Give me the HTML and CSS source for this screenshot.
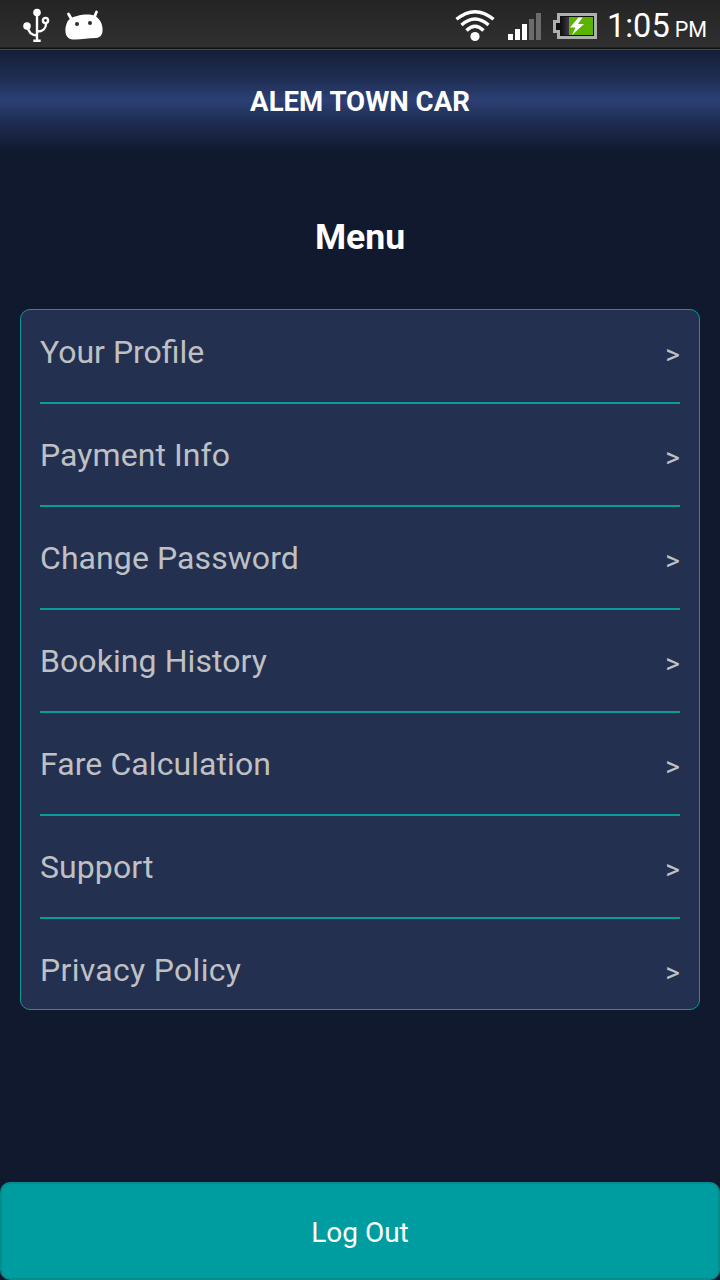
FILE: index.html
```html
<!DOCTYPE html>
<html lang="en">
<head>
<meta charset="UTF-8">
<meta name="viewport" content="width=device-width, initial-scale=1.0">
<title>Alem Town Car</title>
<link rel="stylesheet" href="styles.css">
</head>
<body>
<div class="screen">

  <div class="status-bar">
    <svg class="icon-usb" width="28" height="36" viewBox="0 0 28 36">
      <g fill="none" stroke="#fff" stroke-width="2.4">
        <path d="M14 5V34M14 28.5C8 28 5 25 4.500 19M14 24.500C20 24.500 23 21 23 17"/>
        <circle cx="22.500" cy="13.500" r="2.600"/>
      </g>
      <circle cx="14" cy="5.500" r="3.800" fill="#fff"/>
      <circle cx="4" cy="19" r="3.800" fill="#fff"/>
      <path d="M10.300 32.500h7.400v2.500h-7.400z" fill="#fff"/>
    </svg>
    <svg class="icon-android" width="40" height="32" viewBox="0 0 40 32">
      <path d="M4.500 4L8 10M32.500 2L30 8" stroke="#fff" stroke-width="2.800" stroke-linecap="round"/>
      <path d="M2.500 14C4 9 8 7 13 6C18 4.700 24 4.200 28 5C34 6 38 12 38.500 18C39 24 37 27.500 32 28C24 28 16 30 9 29.500C4 29 2 26 1.500 22C1.200 19 1.500 16.500 2.500 14Z" fill="#fff"/>
      <circle cx="13" cy="14" r="2" fill="#2b2b2b"/>
      <circle cx="26" cy="13" r="2" fill="#2b2b2b"/>
    </svg>

    <div class="status-right">
      <svg class="icon-wifi" width="42" height="34" viewBox="0 0 42 34">
        <g fill="none" stroke="#fff" stroke-width="3.400">
          <path d="M2.500 11.300Q21 -4 39.500 11.300"/>
          <path d="M7.500 17Q21 5 34.500 17"/>
          <path d="M12.500 22.500Q21 14 29.500 22.500"/>
        </g>
        <circle cx="21" cy="28.500" r="4.600" fill="#fff"/>
      </svg>
      <svg class="icon-signal" width="33" height="28" viewBox="0 0 33 28">
        <path d="M0 21h5v6h-5zM7 16h5v11h-5zM14 11h5v16h-5z" fill="#fff"/>
        <path d="M21 6h5v21h-5zM28 0h5v27h-5z" fill="#6b6b6b"/>
      </svg>
      <svg class="icon-battery" width="44" height="27" viewBox="0 0 44 27">
        <defs>
          <linearGradient id="cell" x1="0" x2="1"><stop offset="0" stop-color="#111"/><stop offset="1" stop-color="#41364a"/></linearGradient>
        </defs>
        <path d="M4 0H44V26H4V20H0V7H4Z" fill="#adb0ad"/>
        <path d="M7 3H41V23H7V17H3V10H7Z" fill="#111"/>
        <path d="M8 4h8v18h-8z" fill="url(#cell)"/>
        <path d="M16 4h24v18h-24z" fill="#5bb500"/>
        <path d="M25.500 4.500L17 14.500L22.500 14.500L19 22L31 11L25 11L29.500 4.500Z" fill="#fff"/>
      </svg>
      <div class="clock">1:05<span class="meridiem">PM</span></div>
    </div>
  </div>

  <header class="title-bar">ALEM TOWN CAR</header>

  <h1 class="heading">Menu</h1>

  <nav class="menu">
    <a class="menu-item"><span>Your Profile</span><span class="arrow">&gt;</span></a>
    <a class="menu-item"><span>Payment Info</span><span class="arrow">&gt;</span></a>
    <a class="menu-item"><span>Change Password</span><span class="arrow">&gt;</span></a>
    <a class="menu-item"><span>Booking History</span><span class="arrow">&gt;</span></a>
    <a class="menu-item"><span>Fare Calculation</span><span class="arrow">&gt;</span></a>
    <a class="menu-item"><span>Support</span><span class="arrow">&gt;</span></a>
    <a class="menu-item"><span>Privacy Policy</span><span class="arrow">&gt;</span></a>
  </nav>

  <button class="logout">Log Out</button>

</div>
</body>
</html>
```

FILE: styles.css
```css
:root {
  --bg: #10192d;
  --panel: #233050;
  --teal: #0a9a98;
  --button: #009da0;
  --text: #bfc0c4;
}

* { margin: 0; padding: 0; box-sizing: border-box; }

body {
  background: var(--bg);
  color: #fff;
  font-family: Roboto, sans-serif;
}

.screen {
  display: flex;
  flex-direction: column;
  height: 1280px;
}

/* Status bar */
.status-bar {
  display: flex;
  align-items: flex-start;
  height: 50px;
  padding: 0 13px 0 23px;
  background: linear-gradient(#242424, #303030 47px, #111 48px, #111 49px, #4a4a4a 49px);
}

.icon-usb { margin-top: 7px; }
.icon-android { margin: 10px 0 0 13px; }

.status-right {
  display: flex;
  align-items: flex-start;
  margin-left: auto;
}

.icon-wifi { margin-top: 8px; }
.icon-signal { margin: 13px 0 0 12px; }
.icon-battery { margin: 13px 0 0 12px; }

.clock {
  width: 110px;
  font-size: 32.5px;
  line-height: 53px;
  text-align: right;
  white-space: nowrap;
}

.meridiem {
  margin-left: 5px;
  font-size: 21.5px;
}

/* Title */
.title-bar {
  height: 102px;
  background: linear-gradient(#141f38, #1f2e54 30px, #2c4074 50px, #1f2e54 70px, var(--bg));
  font-size: 27.6px;
  font-weight: 700;
  line-height: 103px;
  text-align: center;
}

.heading {
  margin-top: 60px;
  font-size: 35.6px;
  font-weight: 700;
  line-height: 50px;
  text-align: center;
}

/* Menu */
.menu {
  height: 701px;
  margin: 47px 20px 0;
  padding: 0 19px;
  background: var(--panel);
  border: 1px solid var(--teal);
  border-radius: 10px;
}

.menu-item {
  display: flex;
  align-items: center;
  justify-content: space-between;
  height: 103px;
  border-bottom: 2px solid var(--teal);
  color: var(--text);
  font-size: 32px;
  letter-spacing: 0.08px;
}

.menu-item:first-child {
  height: 94px;
  padding-bottom: 9px;
  letter-spacing: 0;
}

.menu-item:last-child {
  height: 89px;
  padding-top: 12px;
  border-bottom: 0;
  letter-spacing: 0.3px;
}

.arrow {
  margin-top: 6px;
  font-size: 28px;
  letter-spacing: 0;
}

/* Log out */
.logout {
  height: 98px;
  margin-top: auto;
  padding-top: 3px;
  background: var(--button);
  border: 2px solid #078b8d;
  border-radius: 10px;
  color: #fff;
  font: 28px/91px Roboto, sans-serif;
}
```
